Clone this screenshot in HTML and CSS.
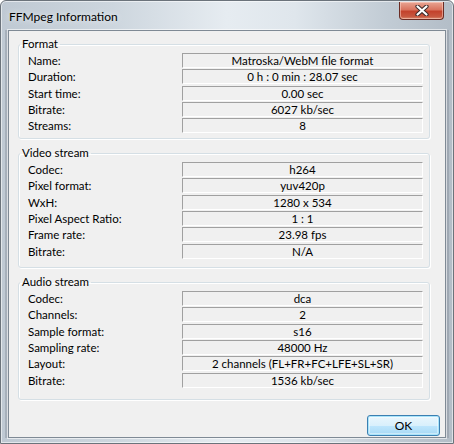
FILE: index.html
```html
<!DOCTYPE html>
<html>
<head>
<meta charset="utf-8">
<title>FFMpeg Information</title>
<link rel="stylesheet" href="styles.css">
</head>
<body>
<div class="window">
  <div class="titlebar">
    <span class="title">FFMpeg Information</span>
    <div class="close">
      <svg width="14" height="11" viewBox="0 0 14 11">
        <path d="M2.5 1.5 L11.5 9.5 M11.5 1.5 L2.5 9.5" stroke="#3b2a2a" stroke-width="4.2" stroke-linecap="round"/>
        <path d="M2.5 1.5 L11.5 9.5 M11.5 1.5 L2.5 9.5" stroke="#ffffff" stroke-width="2.2" stroke-linecap="round"/>
      </svg>
    </div>
  </div>
  <div class="client">
    <fieldset class="group g1">
      <legend>Format</legend>
      <div class="rows">
        <span class="label">Name:</span><span class="value">Matroska/WebM file format</span>
        <span class="label">Duration:</span><span class="value">0 h : 0 min : 28.07 sec</span>
        <span class="label">Start time:</span><span class="value">0.00 sec</span>
        <span class="label">Bitrate:</span><span class="value">6027 kb/sec</span>
        <span class="label">Streams:</span><span class="value">8</span>
      </div>
    </fieldset>
    <fieldset class="group g2">
      <legend>Video stream</legend>
      <div class="rows">
        <span class="label">Codec:</span><span class="value">h264</span>
        <span class="label">Pixel format:</span><span class="value">yuv420p</span>
        <span class="label">WxH:</span><span class="value">1280 x 534</span>
        <span class="label">Pixel Aspect Ratio:</span><span class="value">1 : 1</span>
        <span class="label">Frame rate:</span><span class="value">23.98 fps</span>
        <span class="label">Bitrate:</span><span class="value">N/A</span>
      </div>
    </fieldset>
    <fieldset class="group g3">
      <legend>Audio stream</legend>
      <div class="rows">
        <span class="label">Codec:</span><span class="value">dca</span>
        <span class="label">Channels:</span><span class="value">2</span>
        <span class="label">Sample format:</span><span class="value">s16</span>
        <span class="label">Sampling rate:</span><span class="value">48000 Hz</span>
        <span class="label">Layout:</span><span class="value">2 channels (FL+FR+FC+LFE+SL+SR)</span>
        <span class="label">Bitrate:</span><span class="value">1536 kb/sec</span>
      </div>
    </fieldset>
    <div class="footer">
      <button class="ok">OK</button>
    </div>
  </div>
</div>
</body>
</html>
```
FILE: styles.css
```css
html, body {
  margin: 0;
  padding: 0;
  background: #ffffff;
}
body {
  font-family: Lato, "Noto Sans", sans-serif;
  font-size: 11.5px;
  color: #000;
}
.window {
  width: 454px;
  height: 444px;
  box-sizing: border-box;
  display: flex;
  flex-direction: column;
  border: 1px solid #6b737b;
  border-radius: 6px 6px 0 0;
  background: linear-gradient(to right, #bfc9d3 0%, #cdd6de 25%, #e6ecf1 50%, #dfe6ec 65%, #c2ccd5 85%, #b3bdc7 100%);
  box-shadow: inset 0 0 0 1px rgba(255,255,255,0.55);
  overflow: hidden;
}
.titlebar {
  height: 29px;
  flex: none;
  display: flex;
  justify-content: space-between;
  align-items: flex-start;
  padding-left: 8px;
}
.title {
  margin-top: 7px;
  line-height: 17px;
  font-size: 12px;
  text-shadow: 0 0 6px rgba(255,255,255,0.9);
}
.close {
  margin-top: 1px;
  margin-right: 9px;
  width: 45px;
  height: 18px;
  box-sizing: border-box;
  border: 1px solid #6b2c24;
  border-top: none;
  border-radius: 0 0 4px 4px;
  background: linear-gradient(to bottom, #e8a593 0%, #d9745f 45%, #c3422c 55%, #c7573f 85%, #d98a6d 100%);
  box-shadow: inset 0 0 0 1px rgba(255,220,210,0.5);
  display: flex;
  align-items: center;
  justify-content: center;
}
.client {
  flex: 1;
  margin: 0 7px 5px 7px;
  background: #f0f0f0;
  border: 1px solid #7f8a95;
  box-shadow: 0 0 0 1px rgba(255,255,255,0.6), -3px 0 0 0 rgba(120,130,140,0.35), 3px 0 0 0 rgba(120,130,140,0.35);
  display: flex;
  flex-direction: column;
  padding: 0 15px 0 9px;
}
.group {
  box-sizing: border-box;
  margin: 7px 0 0 0;
  padding: 2px 6px 0 9px;
  border: 1px solid #d5dfe5;
  border-radius: 3px;
  box-shadow: inset 1px 1px 0 #fff, 1px 1px 0 #fff;
  min-width: 0;
}
.g1 { margin-top: 6px; height: 102px; }
.g2 { height: 122px; }
.g3 { height: 125px; }
legend {
  padding: 0 2px;
  margin-left: -8px;
  line-height: 14px;
  height: 14px;
}
.rows {
  display: grid;
  grid-template-columns: 154px 241px;
  grid-auto-rows: 15px;
  row-gap: 1.33px;
}
.label {
  line-height: 15px;
  white-space: nowrap;
}
.value {
  box-sizing: border-box;
  border-top: 1px solid #a0a0a0;
  border-left: 1px solid #a0a0a0;
  border-bottom: 1px solid #ffffff;
  border-right: 1px solid #ffffff;
  text-align: center;
  line-height: 13px;
  white-space: nowrap;
}
.footer {
  display: flex;
  justify-content: flex-end;
  margin-top: 15px;
  margin-right: -10px;
}
.ok {
  width: 73px;
  height: 21px;
  box-sizing: border-box;
  font-family: inherit;
  font-size: 12px;
  color: #000;
  padding: 0;
  border: 1px solid #3c7fb1;
  border-radius: 3px;
  background: linear-gradient(to bottom, #eaf6fd 0%, #d9f0fc 50%, #bee6fd 51%, #a7d9f5 100%);
  box-shadow: inset 0 0 0 1px #a8e4fb, inset 0 0 0 2px rgba(255,255,255,0.4);
}
```
